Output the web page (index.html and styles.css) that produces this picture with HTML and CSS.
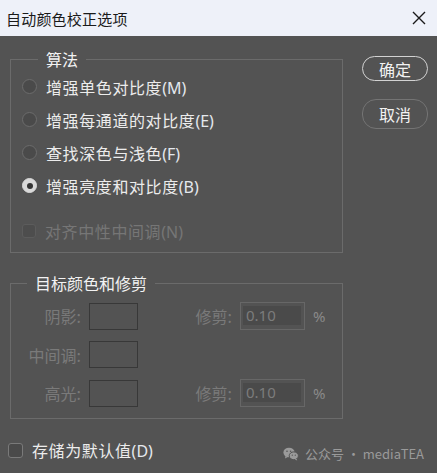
FILE: index.html
```html
<!DOCTYPE html>
<html lang="zh">
<head>
<meta charset="utf-8">
<title>自动颜色校正选项</title>
<link rel="stylesheet" href="styles.css">
</head>
<body>
<div class="titlebar">
  <span class="title">自动颜色校正选项</span>
  <svg class="close" width="14" height="14" viewBox="0 0 14 14"><path d="M1 1L13 13M13 1L1 13" stroke="#1a1a1a" stroke-width="1.4" fill="none"/></svg>
</div>
<div class="dialog">
  <div class="main">
    <div class="left">
      <fieldset class="group algo">
        <legend>算法</legend>
        <div class="opt"><span class="radio"></span><span>增强单色对比度<span class="key">(M)</span></span></div>
        <div class="opt"><span class="radio"></span><span>增强每通道的对比度<span class="key">(E)</span></span></div>
        <div class="opt"><span class="radio"></span><span>查找深色与浅色<span class="key">(F)</span></span></div>
        <div class="opt"><span class="radio on"></span><span>增强亮度和对比度<span class="key">(B)</span></span></div>
        <div class="opt disabled neutral"><span class="check dim"></span><span>对齐中性中间调<span class="key">(N)</span></span></div>
      </fieldset>
      <fieldset class="group target">
        <legend>目标颜色和修剪</legend>
        <div class="grid">
          <span class="lbl">阴影:</span><span class="swatch"></span>
          <span class="lbl">修剪:</span><span class="field"><span class="val">0.10</span></span><span class="pct">%</span>
          <span class="lbl">中间调:</span><span class="swatch"></span>
          <span></span><span></span><span></span>
          <span class="lbl">高光:</span><span class="swatch"></span>
          <span class="lbl">修剪:</span><span class="field"><span class="val">0.10</span></span><span class="pct">%</span>
        </div>
      </fieldset>
    </div>
    <div class="buttons">
      <div class="btn primary">确定</div>
      <div class="btn secondary">取消</div>
    </div>
  </div>
  <div class="footer"><span class="check"></span><span>存储为默认值<span class="key">(D)</span></span></div>
  <div class="watermark">
    <svg width="16" height="14" viewBox="0 0 16 14"><ellipse cx="6" cy="5.5" rx="5.6" ry="4.8" fill="#9a9a9a"/><path d="M2.5 9L2 11.5L4.8 10Z" fill="#9a9a9a"/><ellipse cx="10.8" cy="8.8" rx="4.6" ry="3.9" fill="#9a9a9a" stroke="#535353" stroke-width="1"/><path d="M13.5 11.8L14.2 13.6L11.8 12.4Z" fill="#9a9a9a"/><circle cx="4" cy="4.3" r="0.8" fill="#535353"/><circle cx="7.6" cy="4.3" r="0.8" fill="#535353"/><circle cx="9.3" cy="8.2" r="0.65" fill="#535353"/><circle cx="12.3" cy="8.2" r="0.65" fill="#535353"/></svg>
    <span>公众号 · mediaTEA</span>
  </div>
</div>
</body>
</html>
```

FILE: styles.css
```css
* { box-sizing: border-box; }
html, body { margin: 0; padding: 0; }
body {
  width: 437px;
  height: 473px;
  overflow: hidden;
  font-family: "Noto Sans", "Noto Sans CJK SC", sans-serif;
  background: #535353;
}
.titlebar {
  height: 36px;
  background: #eef1f9;
  display: flex;
  align-items: center;
  justify-content: space-between;
  padding: 0 11px 0 6px;
}
.title {
  font-size: 15px;
  color: #1a1a1a;
  font-family: "Noto Sans CJK SC", sans-serif;
  letter-spacing: 0.2px;
}
.close { display: block; }
.dialog {
  position: relative;
  height: 437px;
  background: #535353;
  color: #e8e8e8;
  font-size: 16px;
}
.main {
  display: flex;
  padding-left: 10px;
}
.left { width: 333px; }
.group {
  margin: 0;
  padding: 0;
  border: 1px solid #6b6b6b;
  min-width: 0;
}
.group legend {
  margin-left: 16px;
  padding: 0 8px;
  line-height: 22px;
  font-size: 16px;
  color: #f2f2f2;
  font-family: "Noto Sans CJK SC", sans-serif;
}
.algo {
  margin-top: 12px;
  padding: 0 0 5px 11px;
}
.opt {
  height: 33px;
  display: flex;
  align-items: center;
  gap: 9px;
  font-family: "Noto Sans CJK SC", sans-serif;
  letter-spacing: 0.6px;
  color: #ececec;
}
.key { font-family: "Noto Sans", sans-serif; letter-spacing: 0; color: #e4e8ee; }
.radio {
  width: 15px;
  height: 15px;
  border-radius: 50%;
  border: 1px solid #6c6c6c;
  background: #4a4a4a;
  flex: none;
  position: relative;
}
.radio.on {
  background: #d9d9d9;
  border-color: #d9d9d9;
}
.radio.on::after {
  content: "";
  position: absolute;
  left: 3.5px;
  top: 3.5px;
  width: 6px;
  height: 6px;
  border-radius: 50%;
  background: #333;
}
.opt.neutral { margin-top: 12px; }
.disabled, .disabled .key { color: #767676; }
.check {
  width: 15px;
  height: 15px;
  border: 1px solid #7a7a7a;
  border-radius: 3px;
  background: #4a4a4a;
  flex: none;
}
.check.dim {
  width: 14px;
  height: 14px;
  border-color: #5c5c5c;
  background: #4d4d4d;
}
.target {
  margin-top: 19px;
  padding: 8px 0 11px 0;
}
.grid {
  display: grid;
  grid-template-columns: 70px 49px 86px 65px auto;
  column-gap: 8px;
  row-gap: 11px;
  align-items: center;
  font-family: "Noto Sans CJK SC", sans-serif;
  color: #7a7a7a;
}
.lbl { text-align: right; }
.swatch {
  height: 27px;
  border: 1.5px solid #383838;
}
.field {
  height: 28px;
  border: 1px solid #676767;
  padding: 3px 3px 4px 2px;
  display: flex;
}
.val {
  flex: 1;
  background: #4a4a4a;
  font-family: "Noto Sans", sans-serif;
  font-size: 15px;
  line-height: 19px;
  color: #7c7c7c;
  padding-left: 3px;
}
.pct {
  font-family: "Noto Sans", sans-serif;
  color: #8a8a8a;
  font-size: 15px;
}
.buttons {
  margin-left: 19px;
  display: flex;
  flex-direction: column;
  width: 66px;
}
.btn {
  display: flex;
  align-items: center;
  justify-content: center;
  font-family: "Noto Sans CJK SC", sans-serif;
  font-size: 16px;
  color: #f2f2f2;
  border-radius: 14px;
}
.btn.primary {
  margin-top: 20px;
  height: 25px;
  border: 1.5px solid #d2d2d2;
}
.btn.secondary {
  margin-top: 18px;
  height: 30px;
  border: 1px solid #747474;
}
.footer {
  margin-top: 19px;
  height: 24px;
  padding-left: 8px;
  display: flex;
  align-items: center;
  gap: 9px;
  font-family: "Noto Sans CJK SC", sans-serif;
  letter-spacing: 0.6px;
  color: #ececec;
}
.watermark {
  position: absolute;
  right: 13px;
  bottom: 10px;
  display: flex;
  align-items: center;
  gap: 6px;
  font-family: "Noto Sans CJK SC", sans-serif;
  font-size: 13px;
  color: #9a9a9a;
}
.watermark svg { display: block; }
```
